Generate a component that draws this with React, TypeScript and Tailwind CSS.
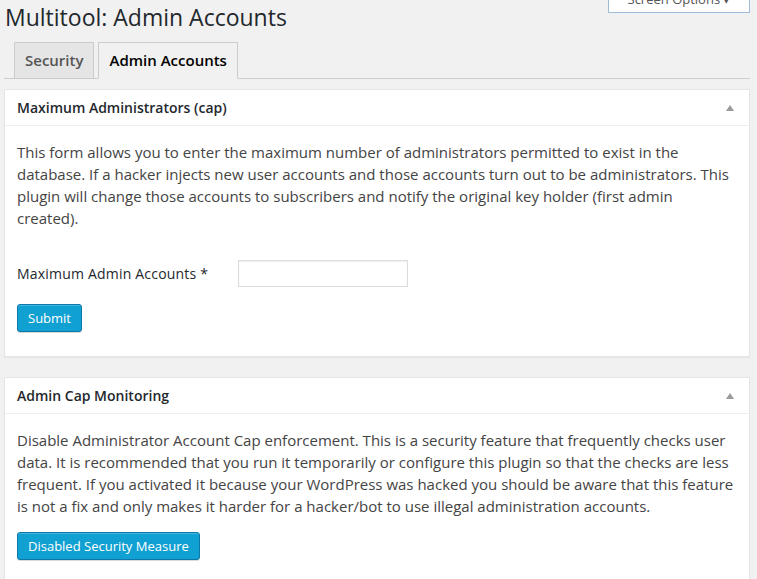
import React from "react";

function Toggle() {
  return (
    <svg width="10" height="8" viewBox="0 0 10 8" className="mr-[14px]">
      <path d="M5 1 L9 7 L1 7 Z" fill="#9a9a9a" />
    </svg>
  );
}

function Postbox({ title, children }: { title: string; children: React.ReactNode }) {
  return (
    <div className="bg-white border border-[#e5e5e5] shadow-[0_1px_1px_rgba(0,0,0,0.04)]">
      <div className="flex h-[36px] items-center justify-between border-b border-[#eee] pl-[12px]">
        <h2 className="text-[14px] font-semibold leading-[20px] text-[#23282d]">{title}</h2>
        <Toggle />
      </div>
      <div className="px-[12px]">{children}</div>
    </div>
  );
}

function PrimaryButton({ label }: { label: string }) {
  return (
    <button className="h-[28px] rounded-[3px] border border-[#0a78a8] bg-[#11a0d2] px-[10px] text-[13px] leading-[26px] text-white shadow-[inset_0_1px_0_rgba(120,200,230,0.5),0_1px_0_rgba(0,0,0,0.15)]">
      {label}
    </button>
  );
}

export default function App() {
  return (
    <div
      className="relative min-h-[579px] overflow-hidden bg-[#f1f1f1] pr-[7px] pl-[4px]"
      style={{ fontFamily: '"Open Sans", "Liberation Sans", sans-serif' }}
    >
      <div className="absolute right-[7px] top-[-14px] flex h-[27px] w-[142px] items-center justify-center border border-[#9fbcd9] bg-white text-[13px] text-[#555]">
        Screen Options ▾
      </div>

      <h1 className="pl-[1px] pt-[3px] text-[23px] font-normal leading-[29px] text-[#23282d]">
        Multitool: Admin Accounts
      </h1>

      <div className="mt-[10px] flex items-end gap-[4px] border-b border-[#ccc] pl-[10px]">
        <div className="mb-[-1px] h-[37px] border border-[#ccc] bg-[#e5e5e5] px-[10px] text-[15px] font-semibold leading-[34px] text-[#555]">
          Security
        </div>
        <div className="mb-[-1px] h-[37px] border border-[#ccc] border-b-[#f1f1f1] bg-[#f1f1f1] px-[10px] text-[15px] font-semibold leading-[34px] text-[#000]">
          Admin Accounts
        </div>
      </div>

      <div className="mt-[10px]">
        <Postbox title="Maximum Administrators (cap)">
          <p className="pt-[15px] text-[15px] leading-[22px] text-[#444]">
            This form allows you to enter the maximum number of administrators permitted to exist in the
            database. If a hacker injects new user accounts and those accounts turn out to be administrators. This
            plugin will change those accounts to subscribers and notify the original key holder (first admin
            created).
          </p>
          <div className="mt-[31px] flex items-center">
            <label className="w-[221px] text-[14px] leading-[20px] tracking-[0.2px] text-[#23282d]">
              Maximum Admin Accounts *
            </label>
            <input
              type="text"
              className="h-[27px] w-[170px] border border-[#ddd] bg-white shadow-[inset_0_1px_2px_rgba(0,0,0,0.07)] outline-none"
            />
          </div>
          <div className="mt-[17px] pb-[24px]">
            <PrimaryButton label="Submit" />
          </div>
        </Postbox>
      </div>

      <div className="mt-[20px]">
        <Postbox title="Admin Cap Monitoring">
          <p className="pt-[15px] text-[15px] leading-[22px] text-[#444]">
            Disable Administrator Account Cap enforcement. This is a security feature that frequently checks user
            data. It is recommended that you run it temporarily or configure this plugin so that the checks are less
            frequent. If you activated it because your WordPress was hacked you should be aware that this feature
            is not a fix and only makes it harder for a hacker/bot to use illegal administration accounts.
          </p>
          <div className="mt-[15px] pb-[24px]">
            <PrimaryButton label="Disabled Security Measure" />
          </div>
        </Postbox>
      </div>
    </div>
  );
}
